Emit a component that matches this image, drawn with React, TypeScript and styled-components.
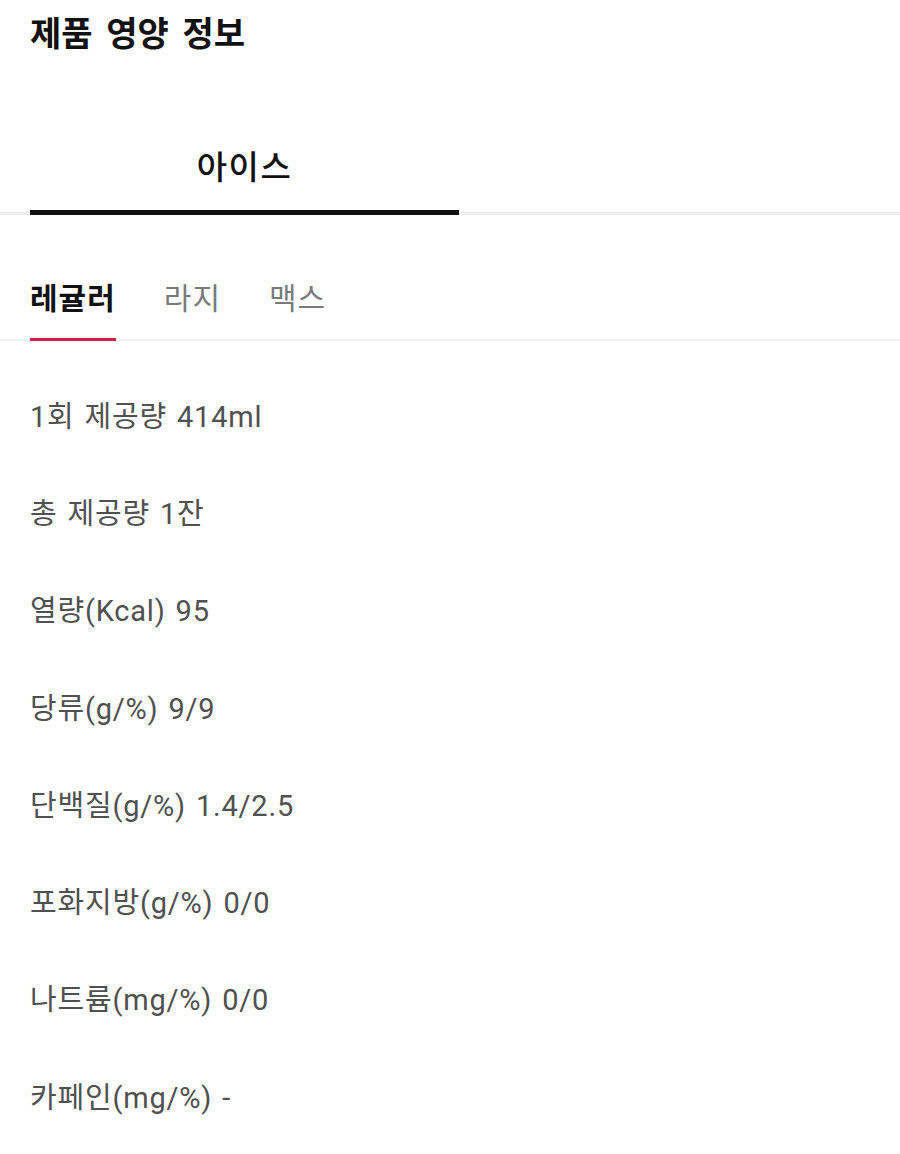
import styled, { createGlobalStyle } from "styled-components";

const GlobalStyle = createGlobalStyle`
    html, body {
        margin: 0;
        padding: 0;
        background: #ffffff;
    }
    body {
        font-family: Roboto, "Noto Sans CJK KR", "Noto Sans", sans-serif;
        -webkit-font-smoothing: antialiased;
    }
`

const sizes = ['레귤러', '라지', '맥스']

const nutrition = [
    '1회 제공량 414ml',
    '총 제공량 1잔',
    '열량(Kcal) 95',
    '당류(g/%) 9/9',
    '단백질(g/%) 1.4/2.5',
    '포화지방(g/%) 0/0',
    '나트륨(mg/%) 0/0',
    '카페인(mg/%) -',
]

export default function App() {
    return (
        <StyledPage>
            <GlobalStyle/>
            <Title>제품 영양 정보</Title>

            <TypeTabs>
                <TypeTab active>아이스</TypeTab>
            </TypeTabs>

            <SizeTabs>
                {sizes.map((s, i) => (
                    <SizeTab key={s} active={i === 0}>{s}</SizeTab>
                ))}
            </SizeTabs>

            <NutritionList>
                {nutrition.map((item) => (
                    <NutritionRow key={item}>{item}</NutritionRow>
                ))}
            </NutritionList>
        </StyledPage>
    );
}

const StyledPage = styled.main`
    width: 900px;
    min-height: 1154px;
    background: #ffffff;
`

const Title = styled.h2`
    margin: 0;
    padding: 8px 30px 0;
    font-family: "Noto Sans CJK KR", sans-serif;
    font-size: 34px;
    font-weight: 700;
    line-height: 48px;
    color: #111111;
    word-spacing: 6px;
`

const TypeTabs = styled.div`
    display: flex;
    padding: 0 30px;
    box-shadow: inset 0 -3px 0 #eeeeee;
`

const TypeTab = styled.div<{ active?: boolean }>`
    width: 429px;
    padding: 85px 0 21px;
    text-align: center;
    font-family: "Noto Sans CJK KR", sans-serif;
    font-size: 33px;
    font-weight: 500;
    line-height: 48px;
    letter-spacing: 1.5px;
    color: #111111;
    border-bottom: 5px solid ${({active}) => active ? '#111111' : 'transparent'};
`

const SizeTabs = styled.div`
    display: flex;
    gap: 48px;
    padding: 59px 30px 0;
    box-shadow: inset 0 -2px 0 #f2f2f2;
`

const SizeTab = styled.div<{ active?: boolean }>`
    padding-bottom: 20px;
    font-family: "Noto Sans CJK KR", sans-serif;
    font-size: 30px;
    font-weight: ${({active}) => active ? 700 : 400};
    line-height: 44px;
    letter-spacing: 1px;
    color: ${({active}) => active ? '#111111' : '#7a7a7a'};
    border-bottom: 3px solid ${({active}) => active ? '#d21f46' : 'transparent'};
`

const NutritionList = styled.ul`
    list-style: none;
    margin: 0;
    padding: 24px 30px 0;
`

const NutritionRow = styled.li`
    height: 97.3px;
    display: flex;
    align-items: center;
    font-size: 29px;
    font-weight: 400;
    letter-spacing: 0.8px;
    word-spacing: 2px;
    color: #505050;
`
